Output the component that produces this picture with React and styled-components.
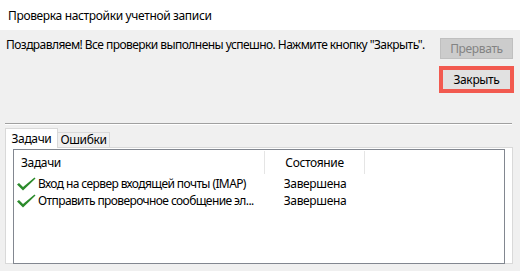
import styled, { createGlobalStyle } from "styled-components";

const GlobalStyle = createGlobalStyle`
	html, body {
		margin: 0;
		padding: 0;
		background: #f0f0f0;
	}
	body {
		font-family: "Noto Sans", "Open Sans", sans-serif;
		font-size: 12px;
		letter-spacing: -0.35px;
		color: #000;
	}
`;

const tasks = [
	{ name: "Вход на сервер входящей почты (IMAP)", state: "Завершена" },
	{ name: "Отправить проверочное сообщение эл...", state: "Завершена" }
];

const CheckIcon = () => (
	<svg width="20" height="14" viewBox="0 0 20 14">
		<path
			d="M1 7.5 L3 6 L7 10 L18.5 0.5 L19.5 1.5 L7 13.5 Z"
			fill="#2c8b2c"
		/>
	</svg>
);

const App = () => {
	return (
		<>
			<GlobalStyle />
			<Window>
				<TitleBar>Проверка настройки учетной записи</TitleBar>
				<Body>
					<TopRow>
						<Message>
							Поздравляем! Все проверки выполнены успешно. Нажмите
							кнопку "Закрыть".
						</Message>
						<ButtonColumn>
							<Button disabled>Прервать</Button>
							<Highlight>
								<Button as="div">Закрыть</Button>
							</Highlight>
						</ButtonColumn>
					</TopRow>
					<Separator />
					<TabStrip>
						<Tab active>Задачи</Tab>
						<Tab>Ошибки</Tab>
					</TabStrip>
					<TabPanel>
						<ListView>
							<HeaderRow>
								<HeaderCell width="251px" align="left">
									Задачи
								</HeaderCell>
								<HeaderCell width="100px">Состояние</HeaderCell>
							</HeaderRow>
							{tasks.map((t) => (
								<Row key={t.name}>
									<NameCell>
										<CheckIcon />
										<span>{t.name}</span>
									</NameCell>
									<StateCell>{t.state}</StateCell>
								</Row>
							))}
						</ListView>
					</TabPanel>
				</Body>
			</Window>
		</>
	);
};

export default App;

/* Styled Components */

const Window = styled.div`
	width: 520px;
	height: 271px;
	display: flex;
	flex-direction: column;
	background: #f0f0f0;
	overflow: hidden;
`;

const TitleBar = styled.div`
	height: 30px;
	flex-shrink: 0;
	background: #ffffff;
	display: flex;
	align-items: center;
	padding: 0 8px;
	box-sizing: border-box;
`;

const Body = styled.div`
	flex: 1;
	display: flex;
	flex-direction: column;
	padding: 7px 7px 0 5px;
`;

const TopRow = styled.div`
	display: flex;
	justify-content: space-between;
	align-items: flex-start;
`;

const Message = styled.div`
	padding-left: 1px;
	line-height: 16px;
	white-space: nowrap;
	letter-spacing: -0.55px;
`;

const ButtonColumn = styled.div`
	display: flex;
	flex-direction: column;
	align-items: center;
	gap: 7px;
	padding-top: 1px;
	margin-right: -1px;
`;

const Button = styled.button`
	width: 73px;
	height: 21px;
	box-sizing: border-box;
	display: flex;
	align-items: center;
	justify-content: center;
	font-family: inherit;
	font-size: 12px;
	letter-spacing: inherit;
	color: #000;
	background: #e1e1e1;
	border: 1px solid #adadad;
	padding: 0;
	margin: 0;

	&:disabled {
		color: #838383;
		background: #cccccc;
		border-color: #bfbfbf;
	}
`;

const Highlight = styled.div`
	width: 75px;
	height: 27px;
	box-sizing: border-box;
	border: 4px solid #f25a50;
	display: flex;
	align-items: center;
	justify-content: center;
	overflow: hidden;

	& > div {
		flex-shrink: 0;
		border: none;
		height: 19px;
	}
`;

const Separator = styled.div`
	margin-top: 30px;
	height: 1px;
	background: #a0a0a0;
	border-bottom: 1px solid #ffffff;
	margin-right: 1px;
`;

const TabStrip = styled.div`
	margin-top: 3px;
	display: flex;
	align-items: flex-end;
	height: 20px;
	position: relative;
	z-index: 1;
`;

const Tab = styled.div`
	width: 53px;
	box-sizing: border-box;
	height: ${(p) => (p.active ? "20px" : "16px")};
	display: flex;
	align-items: ${(p) => (p.active ? "flex-start" : "center")};
	justify-content: center;
	padding-top: ${(p) => (p.active ? "2px" : "0")};
	background: ${(p) => (p.active ? "#ffffff" : "#f0f0f0")};
	border: 1px solid #d9d9d9;
	border-bottom: ${(p) => (p.active ? "none" : "1px solid #d9d9d9")};
	margin-left: ${(p) => (p.active ? "0" : "-1px")};
	line-height: 16px;
`;

const TabPanel = styled.div`
	margin-top: -1px;
	height: 117px;
	box-sizing: border-box;
	background: #ffffff;
	border: 1px solid #d9d9d9;
	padding: 1px 7px 0 7px;
`;

const ListView = styled.div`
	height: 115px;
	box-sizing: border-box;
	border: 1px solid #828790;
	background: #ffffff;
`;

const HeaderRow = styled.div`
	display: flex;
	height: 25px;
	align-items: stretch;
`;

const HeaderCell = styled.div`
	width: ${(p) => p.width};
	box-sizing: border-box;
	display: flex;
	align-items: center;
	justify-content: ${(p) => (p.align === "left" ? "flex-start" : "center")};
	padding-left: ${(p) => (p.align === "left" ? "7px" : "0")};
	border-right: 1px solid #e5e5e5;
	margin: 1px 0;
`;

const Row = styled.div`
	display: flex;
	height: 17px;
	align-items: center;
`;

const NameCell = styled.div`
	width: 251px;
	box-sizing: border-box;
	display: flex;
	align-items: center;
	padding-left: 2px;
	gap: 2px;
	white-space: nowrap;
	letter-spacing: -0.6px;

	svg {
		flex-shrink: 0;
	}
`;

const StateCell = styled.div`
	width: 100px;
	text-align: center;
`;
